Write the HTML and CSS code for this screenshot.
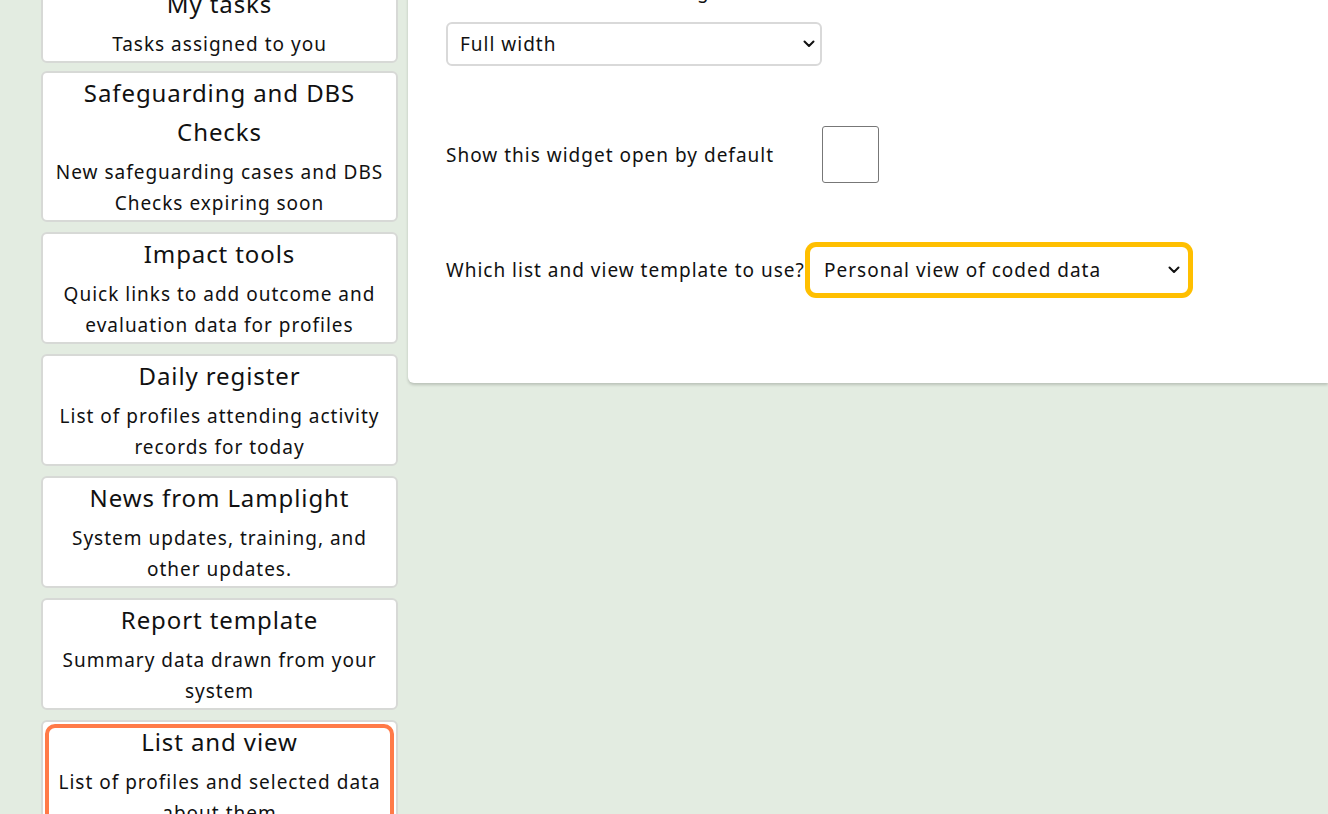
FILE: index.html
```html
<!DOCTYPE html>
<html lang="en">
<head>
<meta charset="utf-8">
<title>Widgets</title>
<link rel="stylesheet" href="styles.css">
</head>
<body>
<div class="page">
  <aside class="widget-list">
    <div class="card card-first">
      <h3 class="card-title">My tasks</h3>
      <p class="card-desc">Tasks assigned to you</p>
    </div>
    <div class="card">
      <h3 class="card-title">Safeguarding and DBS Checks</h3>
      <p class="card-desc">New safeguarding cases and DBS Checks expiring soon</p>
    </div>
    <div class="card">
      <h3 class="card-title">Impact tools</h3>
      <p class="card-desc">Quick links to add outcome and evaluation data for profiles</p>
    </div>
    <div class="card">
      <h3 class="card-title">Daily register</h3>
      <p class="card-desc">List of profiles attending activity records for today</p>
    </div>
    <div class="card">
      <h3 class="card-title">News from Lamplight</h3>
      <p class="card-desc">System updates, training, and other updates.</p>
    </div>
    <div class="card">
      <h3 class="card-title">Report template</h3>
      <p class="card-desc">Summary data drawn from your system</p>
    </div>
    <div class="card card-selected">
      <h3 class="card-title">List and view</h3>
      <p class="card-desc">List of profiles and selected data about them</p>
    </div>
  </aside>

  <main class="panel">
    <div class="field field-stacked">
      <label class="field-label">How wide should this widget be?</label>
      <div class="select select-width">
        <span class="select-value">Full width</span>
        <svg class="chevron" width="12" height="8" viewBox="0 0 12 8"><path d="M1.5 1.5 L6 6 L10.5 1.5" fill="none" stroke="#111" stroke-width="2" stroke-linecap="round" stroke-linejoin="round"/></svg>
      </div>
    </div>

    <div class="field field-row field-check">
      <label class="field-label">Show this widget open by default</label>
      <span class="checkbox"></span>
    </div>

    <div class="field field-row field-template">
      <label class="field-label label-template">Which list and view template to use?</label>
      <div class="select select-template focused">
        <span class="select-value">Personal view of coded data</span>
        <svg class="chevron" width="12" height="8" viewBox="0 0 12 8"><path d="M1.5 1.5 L6 6 L10.5 1.5" fill="none" stroke="#111" stroke-width="2" stroke-linecap="round" stroke-linejoin="round"/></svg>
      </div>
    </div>
  </main>
</div>
</body>
</html>
```

FILE: styles.css
```css
* { box-sizing: border-box; }

html, body {
  margin: 0;
  padding: 0;
  height: 100%;
  overflow: hidden;
}

body {
  background: #e3ece1;
  font-family: "Noto Sans", "Open Sans", sans-serif;
  color: #111;
}

.page {
  display: flex;
  align-items: flex-start;
  gap: 10px;
  padding-left: 41px;
  margin-top: -18px;
}

.widget-list {
  width: 357px;
  flex: none;
  display: flex;
  flex-direction: column;
  gap: 10px;
}

.card {
  background: #fff;
  border: 2px solid #d7d9d6;
  border-radius: 6px;
  padding: 0 10px 1px;
  text-align: center;
  position: relative;
}

.card-first { margin-bottom: -2px; }

.card-title {
  margin: 0 0 6px;
  font-size: 24px;
  font-weight: 400;
  line-height: 39px;
  letter-spacing: 0.9px;
}

.card-desc {
  margin: 0;
  font-size: 19px;
  line-height: 31px;
  letter-spacing: 1px;
}

.card-selected::after {
  content: "";
  position: absolute;
  inset: 2px;
  border: 4px solid #ff7a48;
  border-radius: 10px;
  pointer-events: none;
}

.panel {
  flex: 1;
  background: #fff;
  border-radius: 0 0 0 6px;
  box-shadow: 0 2px 3px rgba(0,0,0,0.18);
  padding: 0 0 88px 38px;
  margin-top: -4px;
}

.field-label {
  font-size: 19px;
  line-height: 26px;
  letter-spacing: 1px;
}

.field-stacked {
  display: flex;
  flex-direction: column;
  align-items: flex-start;
  gap: 18px;
}

.select {
  position: relative;
  display: flex;
  align-items: center;
  background: #fff;
  border: 2px solid #d9d9d9;
  border-radius: 6px;
  font-size: 19px;
  letter-spacing: 1px;
}

.select-value { line-height: 26px; }

.chevron {
  position: absolute;
  top: 50%;
  margin-top: -4px;
}

.select-width {
  width: 376px;
  height: 44px;
  padding-left: 12px;
}

.select-width .chevron { right: 5px; }

.field-row {
  display: flex;
  align-items: center;
}

.field-check {
  margin-top: 60px;
}

.field-check .field-label { width: 376px; }

.checkbox {
  display: block;
  width: 57px;
  height: 57px;
  border: 1px solid #777;
  border-radius: 3px;
  background: #fff;
}

.field-template {
  margin-top: 62px;
}

.label-template {
  width: 362px;
  flex: none;
  white-space: nowrap;
}

.select-template {
  width: 382px;
  height: 50px;
  padding-left: 14px;
}

.select-template .chevron { right: 8px; }

.focused {
  border: 2px solid #ffbf00;
  box-shadow: 0 0 0 3px #ffbf00;
  border-radius: 8px;
}
```
